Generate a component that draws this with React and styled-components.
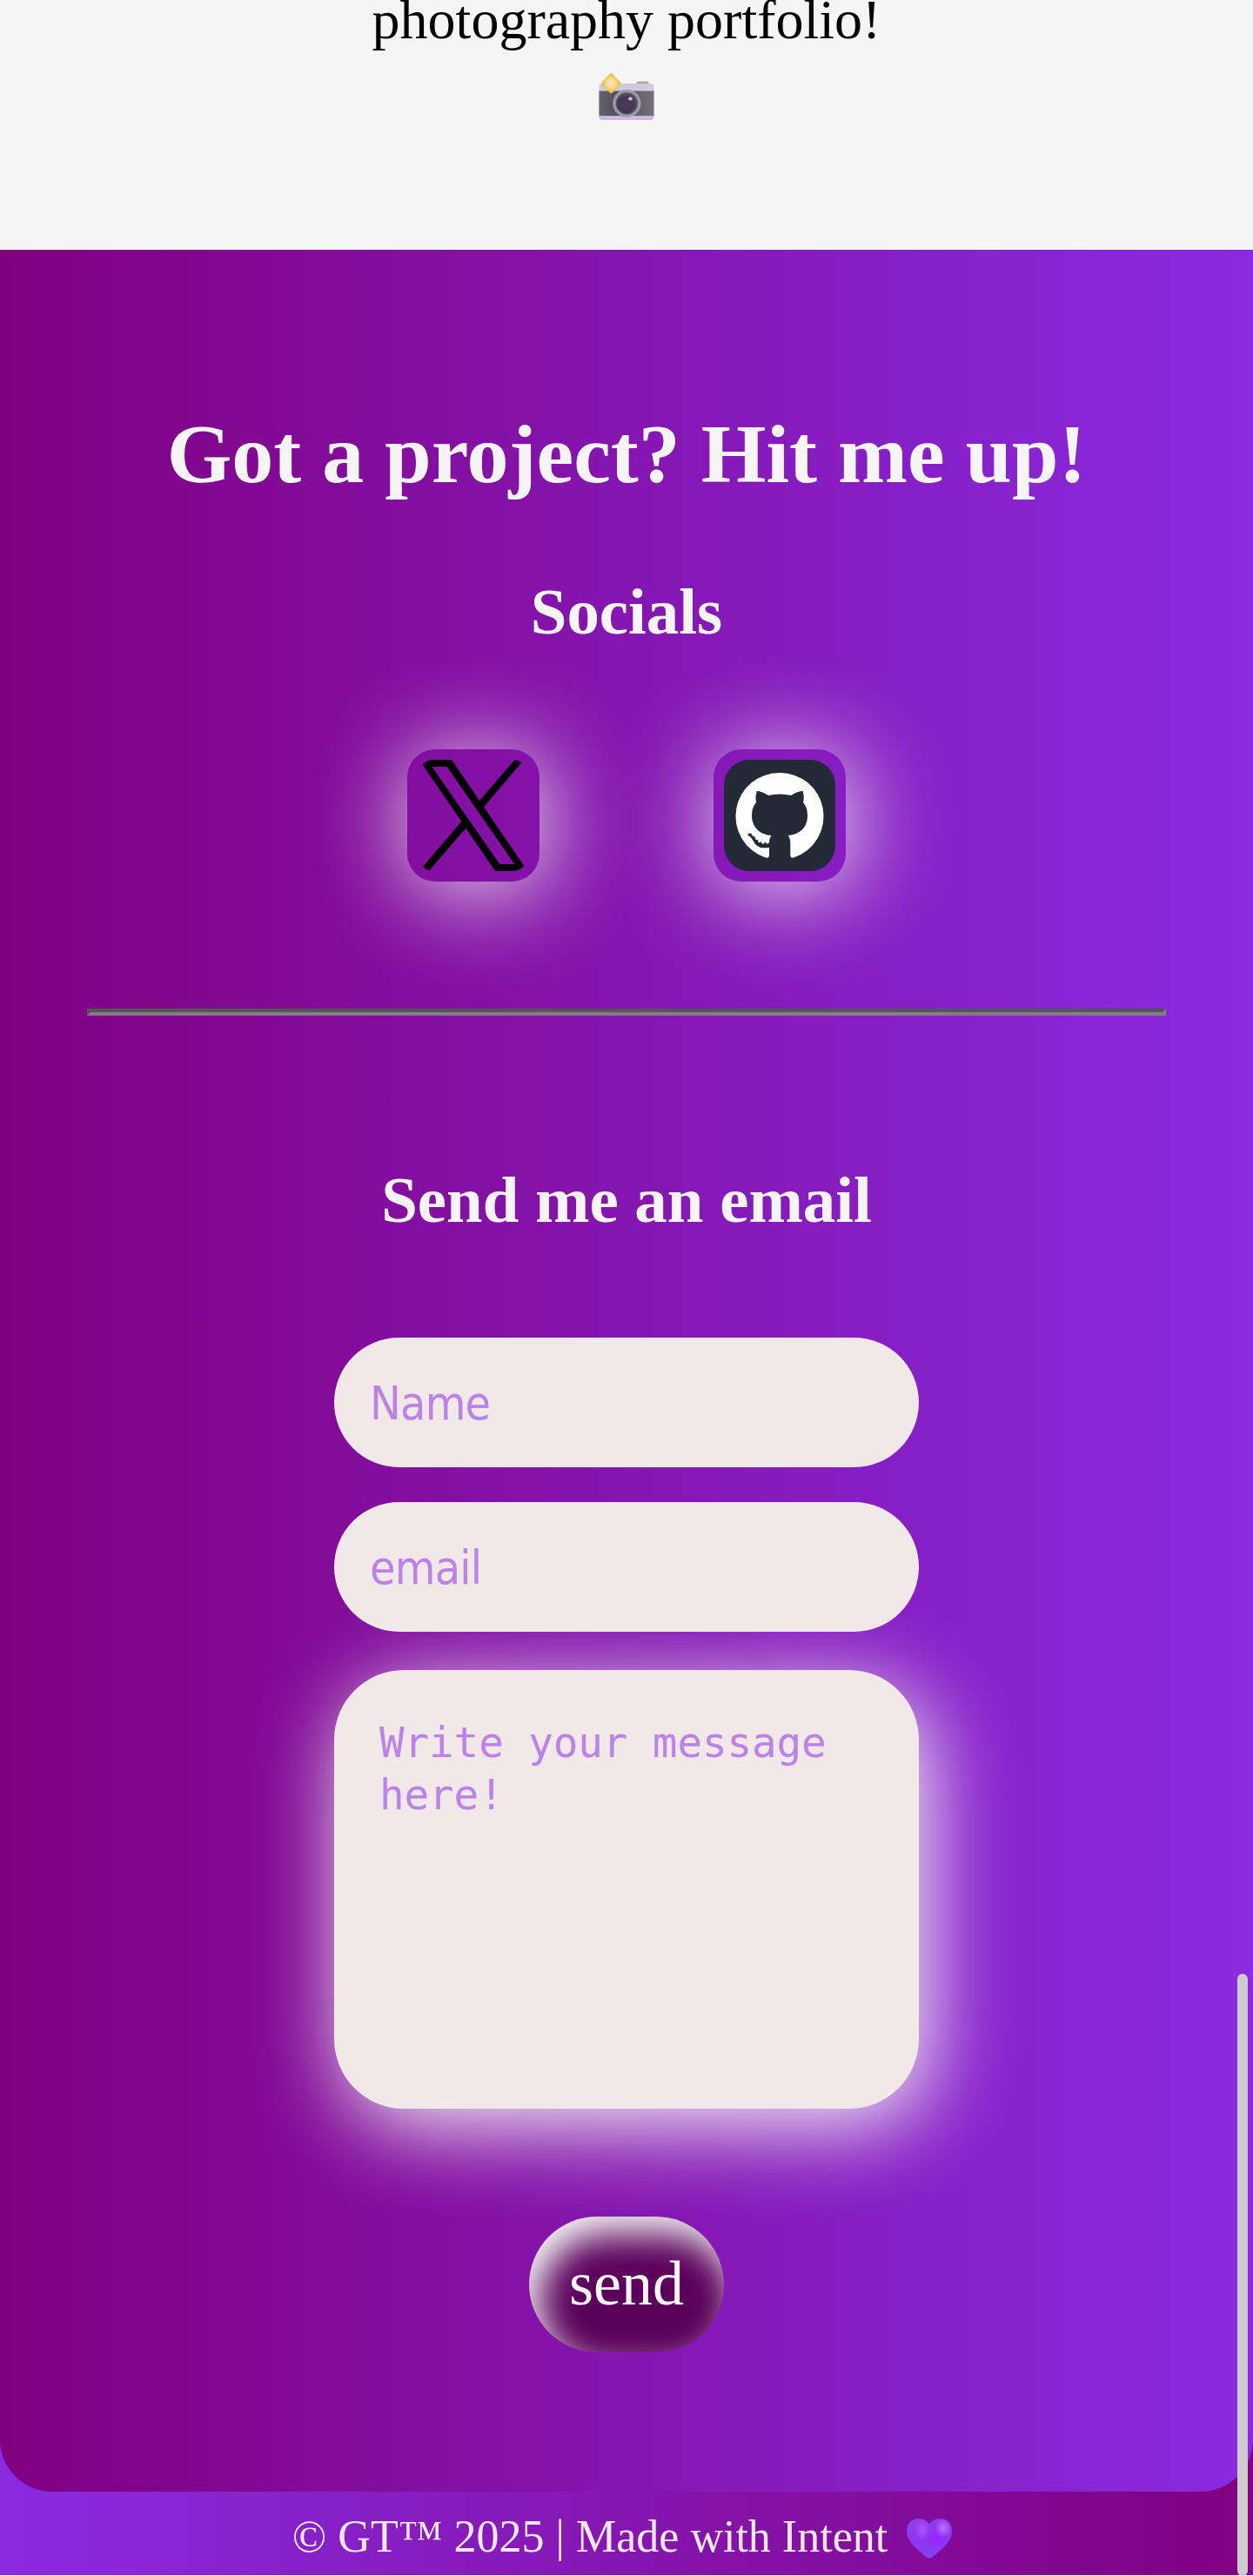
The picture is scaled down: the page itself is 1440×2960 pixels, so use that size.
import React from "react";
import styled, { createGlobalStyle } from "styled-components";

const GlobalStyle = createGlobalStyle`
  *, *::before, *::after { box-sizing: border-box; }
  html, body { margin: 0; padding: 0; background: #f5f5f5; }
  body {
    overflow: hidden;
    font-family: "Liberation Serif", "Times New Roman", serif;
  }
`;

const Page = styled.div`
  position: relative;
  width: 1440px;
  height: 2960px;
  overflow: hidden;
  display: flex;
  flex-direction: column;
  background: #f5f5f5;
`;

const Intro = styled.section`
  height: 287px;
  flex: none;
  display: flex;
  flex-direction: column;
  align-items: center;
`;

const IntroText = styled.p`
  margin: 0 0 38px;
  font-size: 64px;
  line-height: 46px;
  color: #000;
`;

const FooterBand = styled.div`
  height: 2672px;
  flex: none;
  display: flex;
  flex-direction: column;
  background: linear-gradient(90deg, #8a2be2, #800080);
`;

const Contact = styled.section`
  height: 2576px;
  flex: none;
  padding-top: 179px;
  display: flex;
  flex-direction: column;
  align-items: center;
  border-radius: 0 0 60px 60px;
  background: linear-gradient(90deg, #800080, #8a2be2);
  color: #f5f5f5;
`;

const Title = styled.h1`
  margin: 0 0 83px;
  font-size: 96px;
  line-height: 112px;
  font-weight: 700;
  white-space: nowrap;
`;

const Heading = styled.h3`
  margin: 0 0 116px;
  font-size: 74.88px;
  line-height: 84px;
  font-weight: 700;
  white-space: nowrap;
`;

const Socials = styled.div`
  display: flex;
  gap: 200px;
`;

const SocialLink = styled.a`
  width: 152px;
  height: 152px;
  padding: 12px;
  border-radius: 32px;
  box-shadow: 4px 8px 112px #f5f5f5;

  svg { display: block; width: 128px; height: 128px; }
`;

const Divider = styled.hr`
  width: 1240px;
  height: 8px;
  margin: 146px 0 170px;
  border: 4px solid;
  border-color: #555 #808080 #808080 #555;
`;

const Form = styled.form`
  width: 672px;
  display: flex;
  flex-direction: column;
  align-items: center;
`;

const Field = styled.input`
  position: relative;
  width: 100%;
  height: 149px;
  margin: 0 0 40px;
  padding: 2px 41px 0;
  border: 0;
  border-radius: 80px;
  background: #f1e9e7;
  font-family: "DejaVu Sans Condensed", "DejaVu Sans", sans-serif;
  font-stretch: condensed;
  font-size: 53.33px;
  letter-spacing: -0.8px;

  &::placeholder { color: #bb82e7; opacity: 1; }
`;

const Message = styled.textarea`
  display: block;
  width: 100%;
  height: 504px;
  margin: 4px 0 124.4px;
  padding: 54px 52px;
  border: 0;
  border-radius: 80px;
  resize: none;
  overflow: hidden;
  background: #f1e9e7;
  box-shadow: 12px 20px 100px #f5f5f5;
  font-family: "DejaVu Sans Mono", monospace;
  font-size: 47.4px;
  line-height: 60px;

  &::placeholder { color: #bb82e7; opacity: 1; }
`;

const SendButton = styled.button`
  width: 224px;
  height: 156px;
  padding: 0 0 2px;
  border: 0;
  border-radius: 80px;
  background: #5b005b;
  box-shadow: inset 12px 20px 40px #f5f5f5;
  color: #f5f5f5;
  font-family: inherit;
  font-size: 72px;
  line-height: 84px;
`;

const Footer = styled.footer`
  height: 96px;
  display: flex;
  align-items: center;
  justify-content: center;
  gap: 22px;
  padding: 8px 10px 0 0;
  color: #f1e9e7;
  font-size: 52px;
  line-height: 60px;
  white-space: nowrap;

  svg { display: block; margin-top: 4px; }
`;

const ScrollThumb = styled.div`
  position: absolute;
  top: 2268px;
  right: 6px;
  width: 12px;
  height: 692px;
  border-radius: 6px;
  background: #ccc;
`;

const Camera = () => (
  <svg width="64" height="54" viewBox="0 0 64 54">
    <defs>
      <linearGradient id="camTop" x1="0" y1="0" x2="0" y2="1">
        <stop offset="0" stopColor="#cfc9dc" />
        <stop offset="1" stopColor="#ddd5ea" />
      </linearGradient>
      <linearGradient id="camBody" x1="0" y1="0" x2="1" y2="0">
        <stop offset="0" stopColor="#66646e" />
        <stop offset="0.25" stopColor="#55525e" />
        <stop offset="0.8" stopColor="#68656f" />
        <stop offset="1" stopColor="#75717c" />
      </linearGradient>
      <radialGradient id="camLens" cx="0.45" cy="0.55" r="0.55">
        <stop offset="0" stopColor="#4b3c5c" />
        <stop offset="0.6" stopColor="#41364e" />
        <stop offset="1" stopColor="#5a5068" />
      </radialGradient>
      <radialGradient id="spark">
        <stop offset="0" stopColor="#ffe6c6" />
        <stop offset="0.4" stopColor="#f9dc9c" />
        <stop offset="0.85" stopColor="#e9c044" />
      </radialGradient>
    </defs>
    <rect x="43.5" y="9.5" width="14" height="5" rx="2" fill="#aaa8a4" />
    <rect x="0.5" y="12" width="63" height="41.5" rx="4" fill="url(#camTop)" />
    <path d="M.5 48h63v2a4 4 0 0 1-4 4h-55a4 4 0 0 1-4-4z" fill="#cbb9e2" />
    <rect x="0.5" y="20.5" width="63" height="28.5" fill="url(#camBody)" />
    <circle cx="32.4" cy="34.8" r="16" fill="#a29daf" />
    <circle cx="32.4" cy="34.8" r="13.6" fill="#89849a" />
    <circle cx="32.4" cy="34.8" r="12.4" fill="url(#camLens)" />
    <ellipse cx="36.4" cy="29.5" rx="2.4" ry="2.1" fill="#c8bfd0" />
    <path d="M14.3 0Q15.500 0 16.500 1.500L25 10.200Q26.300 11.800 25 13.400L16.500 22Q14.300 24.500 12.200 22L3.600 13.400Q2.300 11.800 3.600 10.200L12.200 1.500Q13 0 14.300 0Z" fill="url(#spark)" />
  </svg>
);

const XLogo = () => (
  <svg viewBox="300 339 384 384">
    <path
      fillRule="evenodd"
      d="M317 356Q330 341 352 339H417L513 480L635 339Q648 340 658 349L528 502L667 706Q652 721 630 723H568L466 575L341 720Q327 717 318 708L451 552ZM349 363L583 699H634L401 363Z"
    />
  </svg>
);

const GithubLogo = () => (
  <svg viewBox="276 339 384 384">
    <rect x="276" y="339" width="384" height="384" rx="88" fill="#242938" />
    <path
      fill="#fff"
      d="M468 384A150 150 0 0 1 518 676Q505 681 505 667V630Q505 609 497 600C536 596 564 574 564 530Q564 504 549 486Q554 467 548 447Q531 447 507 462Q468 453 429 462Q405 447 389 447Q383 467 387 486Q372 504 372 530C372 574 402 597 440 600Q432 609 432 625L424 629L418 622L413 629L406 627L404 621L398 625L393 621L394 614L387 615L383 610L385 604L378 605L376 599L371 601L372 594Q358 590 358 599Q369 603 376 617Q388 643 416 643Q425 643 432 641V667Q432 681 418 676A150 150 0 0 1 468 384Z"
    />
  </svg>
);

const Heart = () => (
  <svg width="52" height="46" viewBox="0 0 52 46">
    <defs>
      <linearGradient id="heartBase" x1="0" y1="0" x2="0.7" y2="1">
        <stop offset="0" stopColor="#8c45e6" />
        <stop offset="0.5" stopColor="#8c35f0" />
        <stop offset="1" stopColor="#8642f4" />
      </linearGradient>
      <radialGradient id="heartLeft">
        <stop offset="0" stopColor="#b252ff" />
        <stop offset="1" stopColor="#b252ff" stopOpacity="0" />
      </radialGradient>
      <radialGradient id="heartRight">
        <stop offset="0" stopColor="#c070ff" />
        <stop offset="1" stopColor="#c070ff" stopOpacity="0" />
      </radialGradient>
      <radialGradient id="heartLow">
        <stop offset="0" stopColor="#a020ff" />
        <stop offset="1" stopColor="#a020ff" stopOpacity="0" />
      </radialGradient>
    </defs>
    <path d="M26 6C23 2 19 0 14 0C6 0 0 6 0 14.500C0 27 12 35 22 44Q26 47.500 30 44C40 35 52 27 52 14.500C52 6 46 0 38 0C33 0 29 2 26 6Z" fill="url(#heartBase)" />
    <ellipse cx="36" cy="25" rx="12" ry="13" fill="url(#heartLow)" />
    <ellipse cx="18" cy="13" rx="10" ry="12" fill="url(#heartLeft)" />
    <ellipse cx="42" cy="11" rx="10" ry="11" fill="url(#heartRight)" />
  </svg>
);

export default function App() {
  return (
    <>
      <GlobalStyle />
      <Page>
        <Intro>
          <IntroText>photography portfolio!</IntroText>
          <Camera />
        </Intro>
        <FooterBand>
          <Contact>
            <Title>Got a project? Hit me up!</Title>
            <Heading>Socials</Heading>
            <Socials>
              <SocialLink aria-label="X">
                <XLogo />
              </SocialLink>
              <SocialLink aria-label="GitHub">
                <GithubLogo />
              </SocialLink>
            </Socials>
            <Divider />
            <Heading>Send me an email</Heading>
            <Form>
              <Field placeholder="Name" />
              <Field placeholder="email" />
              <Message placeholder="Write your message here!" />
              <SendButton type="button">send</SendButton>
            </Form>
          </Contact>
          <Footer>
            <span>© GT™ 2025 | Made with Intent</span>
            <Heart />
          </Footer>
        </FooterBand>
        <ScrollThumb />
      </Page>
    </>
  );
}
